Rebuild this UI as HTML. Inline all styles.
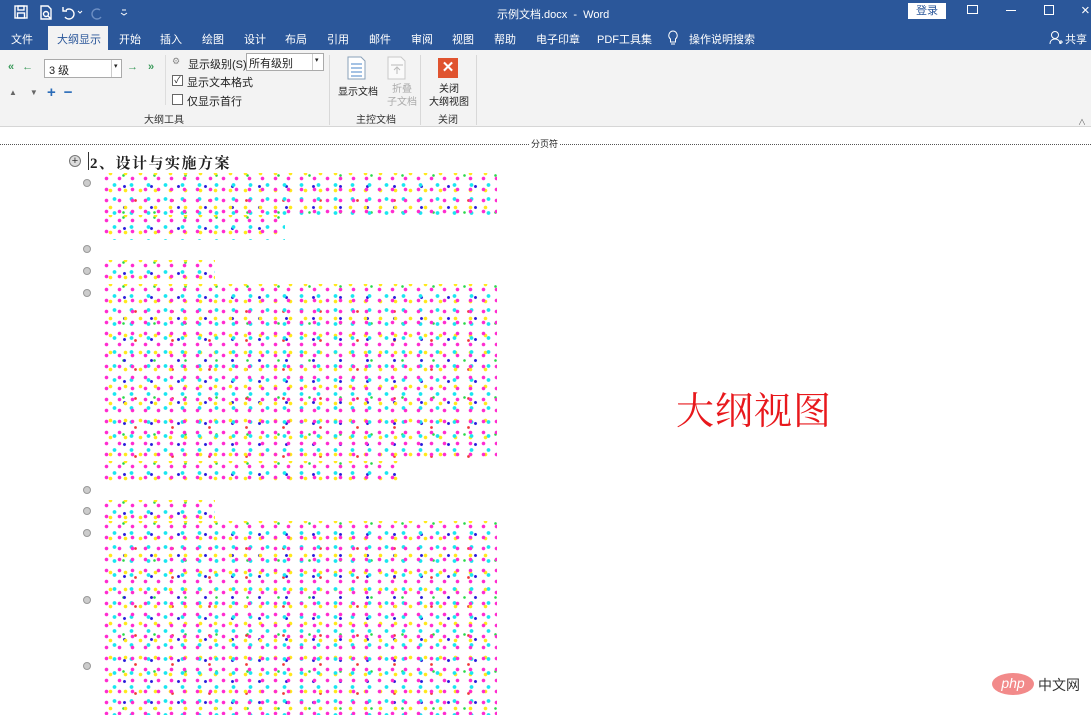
<!DOCTYPE html>
<html><head><meta charset="utf-8"><style>
*{margin:0;padding:0;box-sizing:border-box}
body{width:1091px;height:715px;overflow:hidden;background:#fff;font-family:"Liberation Sans","Noto Sans CJK SC",sans-serif;position:relative;font-size:11px;color:#222}
.abs{position:absolute}
#title{left:0;top:0;width:1091px;height:26px;background:#2b579a}
#tabs{left:0;top:26px;width:1091px;height:24px;background:#2b579a}
.w{color:#fff}
.tab{position:absolute;top:31px;color:#fff;font-size:11px}
#rib{left:0;top:50px;width:1091px;height:77px;background:#f3f3f3;border-bottom:1px solid #d6d6d6}
.sep{position:absolute;top:55px;width:1px;height:70px;background:#d8d8d8}
.gl{position:absolute;top:111px;font-size:10px;color:#333}
.dots{position:absolute;
background-image:
radial-gradient(circle,#ff2bd0 1.5px,transparent 2.1px),
radial-gradient(circle,#19e6f0 1.6px,transparent 2.2px),
radial-gradient(circle,#ffe81a 1.5px,transparent 2.1px),
radial-gradient(circle,#2a1cdc 1.2px,transparent 1.8px),
radial-gradient(circle,#f03a3a 1.1px,transparent 1.7px),
radial-gradient(circle,#2ad84a 1px,transparent 1.6px);
background-size:13px 11px,17px 14px,15px 17px,27px 21px,37px 29px,31px 37px;
background-position:0 0,6px 5px,3px 9px,11px 3px,17px 13px,8px 21px;}
.bul{position:absolute;left:83px;width:8px;height:8px;border-radius:50%;background:#ccc;border:1px solid #999}
</style></head><body>
<div id="title" class="abs"></div>
<div id="tabs" class="abs"></div>
<svg class="abs" style="left:14px;top:5px" width="120" height="16" viewBox="0 0 120 16">
<g fill="none" stroke="#fff" stroke-width="1.4">
<rect x="1" y="1" width="12" height="12"/><rect x="4" y="1" width="6" height="4"/><rect x="3.5" y="8" width="7" height="5"/>
<path d="M27 1h7l3 3v10h-10z"/><circle cx="32" cy="9" r="2.5"/><path d="M34 11l3 3"/>
<path d="M52 5a5 5 0 1 1 -1 7"/><path d="M49 2v4h4"/>
</g>
<path d="M64 6l2 2 2-2" stroke="#fff" fill="none"/>
<path d="M86 5a5 5 0 1 0 1 7" stroke="#6d8fc4" stroke-width="1.4" fill="none"/>
<path d="M108 5h4M107 8l3 2 3-2" stroke="#fff" fill="none"/>
</svg>
<div class="abs w" style="left:497px;top:6px;font-size:11px">示例文档.docx&nbsp; - &nbsp;Word</div>
<div class="abs" style="left:908px;top:3px;width:38px;height:16px;background:#fff;color:#2b579a;font-size:11px;text-align:center;line-height:16px">登录</div>
<div class="abs" style="left:967px;top:5px;width:11px;height:9px;border:1px solid #fff"></div>
<div class="abs" style="left:1006px;top:10px;width:10px;height:1px;background:#fff"></div>
<div class="abs" style="left:1044px;top:5px;width:10px;height:10px;border:1px solid #fff"></div>
<div class="abs w" style="left:1081px;top:2px;font-size:15px">×</div>
<div class="abs" style="left:48px;top:26px;width:60px;height:25px;background:#f3f3f3"></div>
<div class="tab" style="left:11px">文件</div>
<div class="tab" style="left:57px;color:#2b579a">大纲显示</div>
<div class="tab" style="left:119px">开始</div>
<div class="tab" style="left:160px">插入</div>
<div class="tab" style="left:202px">绘图</div>
<div class="tab" style="left:244px">设计</div>
<div class="tab" style="left:285px">布局</div>
<div class="tab" style="left:327px">引用</div>
<div class="tab" style="left:369px">邮件</div>
<div class="tab" style="left:411px">审阅</div>
<div class="tab" style="left:452px">视图</div>
<div class="tab" style="left:494px">帮助</div>
<div class="tab" style="left:536px">电子印章</div>
<div class="tab" style="left:597px">PDF工具集</div>
<svg class="abs" style="left:667px;top:30px" width="12" height="16"><path d="M6 1a4.5 4.5 0 0 0 -2.5 8v3h5v-3a4.5 4.5 0 0 0 -2.5 -8zM4 14h4" stroke="#fff" fill="none"/></svg>
<div class="tab" style="left:689px">操作说明搜索</div>
<svg class="abs" style="left:1049px;top:30px" width="14" height="16"><circle cx="6" cy="5" r="3.5" stroke="#fff" fill="none"/><path d="M1 14c0-4 3-5 5-5s5 1 5 5M10 12h4M12 10v4" stroke="#fff" fill="none"/></svg>
<div class="tab" style="left:1065px">共享</div>
<div id="rib" class="abs"></div>
<div class="abs" style="left:8px;top:61px;color:#3a9a5a;font-size:11px;font-weight:bold;letter-spacing:8px">«←</div>
<div class="abs" style="left:44px;top:59px;width:78px;height:19px;background:#fff;border:1px solid #aaa;font-size:11px;padding:2px 4px">3 级</div>
<div class="abs" style="left:111px;top:60px;width:1px;height:17px;background:#ccc"></div>
<div class="abs" style="left:114px;top:62px;font-size:7px">▾</div>
<div class="abs" style="left:127px;top:61px;color:#3a9a5a;font-size:11px;font-weight:bold;letter-spacing:10px">→»</div>
<div class="abs" style="left:9px;top:88px;color:#666;font-size:8px;letter-spacing:13px">▲▼</div>
<div class="abs" style="left:47px;top:84px;color:#2b6cb8;font-size:15px;font-weight:bold;letter-spacing:8px">+−</div>
<div class="abs" style="left:165px;top:55px;width:1px;height:50px;background:#ddd"></div>
<div class="abs" style="left:172px;top:56px;color:#888;font-size:9px">⚙</div>
<div class="abs" style="left:188px;top:56px;font-size:11px">显示级别(S):</div>
<div class="abs" style="left:246px;top:53px;width:78px;height:18px;background:#fff;border:1px solid #aaa;font-size:11px;padding:1px 2px">所有级别</div>
<div class="abs" style="left:312px;top:54px;width:1px;height:16px;background:#ccc"></div>
<div class="abs" style="left:315px;top:56px;font-size:7px">▾</div>
<div class="abs" style="left:172px;top:75px;width:11px;height:11px;border:1px solid #666;background:#fff;font-size:9px;line-height:9px;text-align:center">✓</div>
<div class="abs" style="left:187px;top:74px;font-size:11px">显示文本格式</div>
<div class="abs" style="left:172px;top:94px;width:11px;height:11px;border:1px solid #666;background:#fff"></div>
<div class="abs" style="left:187px;top:93px;font-size:11px">仅显示首行</div>
<div class="gl" style="left:144px">大纲工具</div>
<div class="sep" style="left:329px"></div>
<svg class="abs" style="left:347px;top:56px" width="20" height="24"><path d="M1 1h13l4 4v18h-17z" fill="#fff" stroke="#8aa0b8"/><g stroke="#4a86c8"><path d="M4 8h11M4 12h11M4 16h11M4 20h11"/></g></svg>
<svg class="abs" style="left:387px;top:56px" width="20" height="24"><path d="M1 1h13l4 4v18h-17z" fill="#fafafa" stroke="#c8c8c8"/><path d="M10 18v-6M7 14l3-3 3 3M4 9h12" stroke="#bbb" fill="none"/></svg>
<div class="abs" style="left:338px;top:83px;font-size:10px">显示文档</div>
<div class="abs" style="left:387px;top:83px;font-size:10px;color:#aaa;text-align:center;line-height:13px">折叠<br>子文档</div>
<div class="gl" style="left:356px">主控文档</div>
<div class="sep" style="left:420px"></div>
<div class="abs" style="left:438px;top:58px;width:20px;height:20px;background:#e0532f;color:#fff;font-size:15px;font-weight:bold;text-align:center;line-height:20px">✕</div>
<div class="abs" style="left:429px;top:83px;font-size:10px;text-align:center;line-height:13px">关闭<br>大纲视图</div>
<div class="gl" style="left:438px">关闭</div>
<div class="sep" style="left:476px"></div>
<div class="abs" style="left:1078px;top:117px;font-size:8px;color:#666">∧</div>
<div class="abs" style="left:0;top:144px;width:1091px;border-top:1px dotted #555"></div>
<div class="abs" style="left:529px;top:137px;background:#fff;font-size:9px;padding:0 2px">分页符</div>
<div class="abs" style="left:69px;top:155px;width:12px;height:12px;border-radius:50%;border:1px solid #777;background:#ddd;font-size:11px;line-height:10px;text-align:center;color:#333">+</div>
<div class="abs" style="left:88px;top:152px;width:1px;height:18px;background:#333"></div>
<div class="abs" style="left:90px;top:152px;font-size:15px;font-weight:bold;font-family:'Liberation Serif','Noto Serif CJK SC',serif;letter-spacing:1.5px">2、设计与实施方案</div>
<div class="bul" style="top:179px"></div>
<div class="bul" style="top:245px"></div>
<div class="bul" style="top:267px"></div>
<div class="bul" style="top:289px"></div>
<div class="bul" style="top:486px"></div>
<div class="bul" style="top:507px"></div>
<div class="bul" style="top:529px"></div>
<div class="bul" style="top:596px"></div>
<div class="bul" style="top:662px"></div>
<div class="dots" style="left:100px;top:173px;width:397px;height:42px"></div>
<div class="dots" style="left:100px;top:215px;width:185px;height:25px"></div>
<div class="dots" style="left:100px;top:260px;width:115px;height:22px"></div>
<div class="dots" style="left:100px;top:284px;width:397px;height:177px"></div>
<div class="dots" style="left:100px;top:461px;width:300px;height:22px"></div>
<div class="dots" style="left:100px;top:500px;width:115px;height:20px"></div>
<div class="dots" style="left:100px;top:521px;width:397px;height:194px"></div>
<div class="abs" style="left:676px;top:380px;font-size:38px;color:#e8181c;font-family:'Liberation Serif','Noto Serif CJK SC',serif;letter-spacing:1px">大纲视图</div>
<div class="abs" style="left:992px;top:673px;width:42px;height:22px;border-radius:50%;background:#f28a8a;color:#fff;font-style:italic;font-size:14px;text-align:center;line-height:21px">php</div>
<div class="abs" style="left:1038px;top:675px;font-size:14px;color:#333">中文网</div>
</body></html>
